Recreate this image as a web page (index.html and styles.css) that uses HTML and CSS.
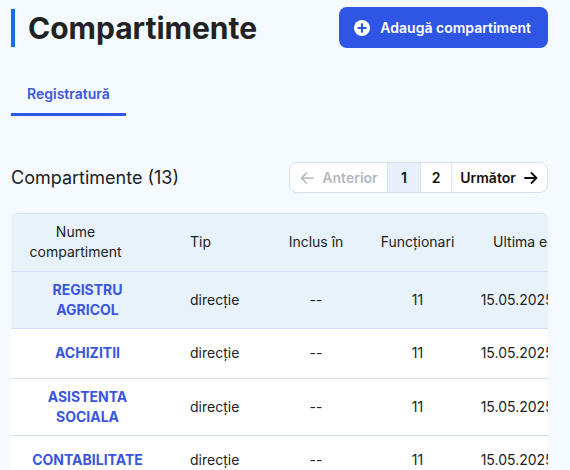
FILE: index.html
```html
<!DOCTYPE html>
<html lang="ro">
<head>
<meta charset="utf-8">
<title>Compartimente</title>
<link rel="stylesheet" href="styles.css">
</head>
<body>
<div class="page">
  <header class="page-header">
    <h1 class="page-title">Compartimente</h1>
    <button class="btn-primary" type="button">
      <svg class="btn-icon" viewBox="0 0 16 16" width="16" height="16" aria-hidden="true">
        <circle cx="8" cy="8" r="8" fill="#fff"/>
        <path d="M8 4.3v7.4M4.3 8h7.4" stroke="#2f55e4" stroke-width="2.2" stroke-linecap="round"/>
      </svg>
      <span>Adaugă compartiment</span>
    </button>
  </header>

  <nav class="tabs">
    <a class="tab is-active" href="#">Registratură</a>
  </nav>

  <section class="list">
    <div class="list-toolbar">
      <h2 class="list-title">Compartimente (13)</h2>
      <div class="pager">
        <button class="pager-btn pager-prev" type="button" disabled>
          <svg viewBox="0 0 16 16" width="16" height="16" aria-hidden="true"><path d="M14 8H2.5M7.5 3L2.5 8l5 5" fill="none" stroke="currentColor" stroke-width="1.6" stroke-linecap="round" stroke-linejoin="round"/></svg>
          <span>Anterior</span>
        </button>
        <button class="pager-btn pager-num is-current" type="button">1</button>
        <button class="pager-btn pager-num pager-two" type="button">2</button>
        <button class="pager-btn pager-next" type="button">
          <span>Următor</span>
          <svg viewBox="0 0 16 16" width="16" height="16" aria-hidden="true"><path d="M2 8h11.5M8.5 3l5 5-5 5" fill="none" stroke="currentColor" stroke-width="1.8" stroke-linecap="round" stroke-linejoin="round"/></svg>
        </button>
      </div>
    </div>

    <div class="table-wrap">
      <table class="data-table">
        <colgroup>
          <col class="c-name"><col class="c-type"><col class="c-parent"><col class="c-staff"><col class="c-date"><col class="c-actions">
        </colgroup>
        <thead>
          <tr>
            <th class="th-name">Nume compartiment</th>
            <th class="th-left">Tip</th>
            <th>Inclus în</th>
            <th>Funcționari</th>
            <th class="cell-date">Ultima editare</th>
            <th>Acțiuni</th>
          </tr>
        </thead>
        <tbody>
          <tr class="is-selected">
            <td class="td-name"><a href="#">REGISTRU AGRICOL</a></td>
            <td class="td-left">direcție</td>
            <td>--</td>
            <td>11</td>
            <td class="cell-date">15.05.2025, 10:42</td>
            <td>—</td>
          </tr>
          <tr>
            <td class="td-name"><a href="#">ACHIZITII</a></td>
            <td class="td-left">direcție</td>
            <td>--</td>
            <td>11</td>
            <td class="cell-date">15.05.2025, 10:42</td>
            <td>—</td>
          </tr>
          <tr>
            <td class="td-name"><a href="#">ASISTENTA SOCIALA</a></td>
            <td class="td-left">direcție</td>
            <td>--</td>
            <td>11</td>
            <td class="cell-date">15.05.2025, 10:42</td>
            <td>—</td>
          </tr>
          <tr>
            <td class="td-name"><a href="#">CONTABILITATE</a></td>
            <td class="td-left">direcție</td>
            <td>--</td>
            <td>11</td>
            <td class="cell-date">15.05.2025, 10:42</td>
            <td>—</td>
          </tr>
          <tr>
            <td class="td-name"><a href="#">RESURSE UMANE</a></td>
            <td class="td-left">direcție</td>
            <td>--</td>
            <td>11</td>
            <td class="cell-date">15.05.2025, 10:42</td>
            <td>—</td>
          </tr>
        </tbody>
      </table>
    </div>
  </section>
</div>
</body>
</html>
```

FILE: styles.css
```css
* { box-sizing: border-box; }

html, body {
  margin: 0;
  background: #f5faff;
}

body {
  font-family: Inter, "Noto Sans", "DejaVu Sans", sans-serif;
  color: #222;
  overflow: hidden;
}

.page {
  padding: 7px 22px 0 11px;
}

.page-header {
  display: flex;
  justify-content: space-between;
  align-items: center;
  height: 41px;
}

.page-title {
  margin: 0;
  border-left: 4px solid #1c6ee0;
  padding-left: 13px;
  font-size: 30px;
  line-height: 38px;
  font-weight: 700;
  color: #222;
}

.btn-primary {
  display: flex;
  align-items: center;
  gap: 10px;
  height: 41px;
  padding: 0 17px 0 15px;
  border: 0;
  border-radius: 8px;
  background: #2f55e4;
  color: #fff;
  font-family: inherit;
  font-size: 14px;
  font-weight: 600;
  cursor: pointer;
}

.btn-icon { display: block; flex: none; }

.tabs {
  display: flex;
  margin-top: 27px;
}

.tab {
  display: block;
  padding: 10px 16px 11px;
  font-size: 14px;
  line-height: 17px;
  font-weight: 600;
  color: #3a56e0;
  text-decoration: none;
  border-bottom: 3px solid transparent;
}

.tab.is-active { border-bottom-color: #2f55e4; }

.list-toolbar {
  display: flex;
  justify-content: space-between;
  align-items: center;
  margin-top: 46px;
  height: 31px;
}

.list-title {
  margin: 0;
  font-size: 18px;
  font-weight: 400;
  color: #222;
}

.pager {
  display: flex;
  height: 31px;
  border: 1px solid #d7e2f6;
  border-radius: 8px;
  background: #fff;
  overflow: hidden;
}

.pager-btn {
  display: flex;
  align-items: center;
  justify-content: center;
  gap: 7px;
  height: 100%;
  border: 0;
  background: transparent;
  font-family: inherit;
  font-size: 14px;
  font-weight: 600;
  color: #111;
  cursor: pointer;
}

.pager-btn + .pager-btn { border-left: 1px solid #d7e2f6; }

.pager-prev { width: 97px; color: #b3b8c0; cursor: default; }
.pager-num { width: 33px; }
.pager-two { width: 31px; }
.pager-next { width: 96px; }
.pager-btn.is-current { background: #e8f1fb; }

.table-wrap {
  margin-top: 20px;
  overflow-x: auto;
  border-top: 1px solid #d6e1f7;
  border-radius: 6px 6px 0 0;
  background: #fff;
}

.data-table {
  table-layout: fixed;
  width: 716px;
  border-collapse: collapse;
  font-size: 14px;
  line-height: 20px;
}

.c-name { width: 153px; }
.c-type { width: 104px; }
.c-parent { width: 96px; }
.c-staff { width: 107px; }
.c-date { width: 136px; }
.c-actions { width: 120px; }

.data-table th,
.data-table td {
  padding: 8px 16px;
  text-align: center;
  vertical-align: middle;
  border-bottom: 1px solid #d6e1f7;
  white-space: normal;
}

.data-table th {
  font-weight: 400;
  color: #222;
  background: #e8f2fb;
  height: 57px;
}

.data-table td { height: 50px; color: #222; }

.data-table .cell-date {
  padding-left: 6px;
  padding-right: 6px;
  white-space: nowrap;
}

.data-table .th-name { padding-right: 40px; }
.data-table .th-left,
.data-table .td-left { text-align: left; padding-left: 26px; }

.td-name a {
  color: #3a56e0;
  font-weight: 700;
  text-decoration: none;
}

.data-table tr.is-selected td { background: #e8f2fb; }
```
